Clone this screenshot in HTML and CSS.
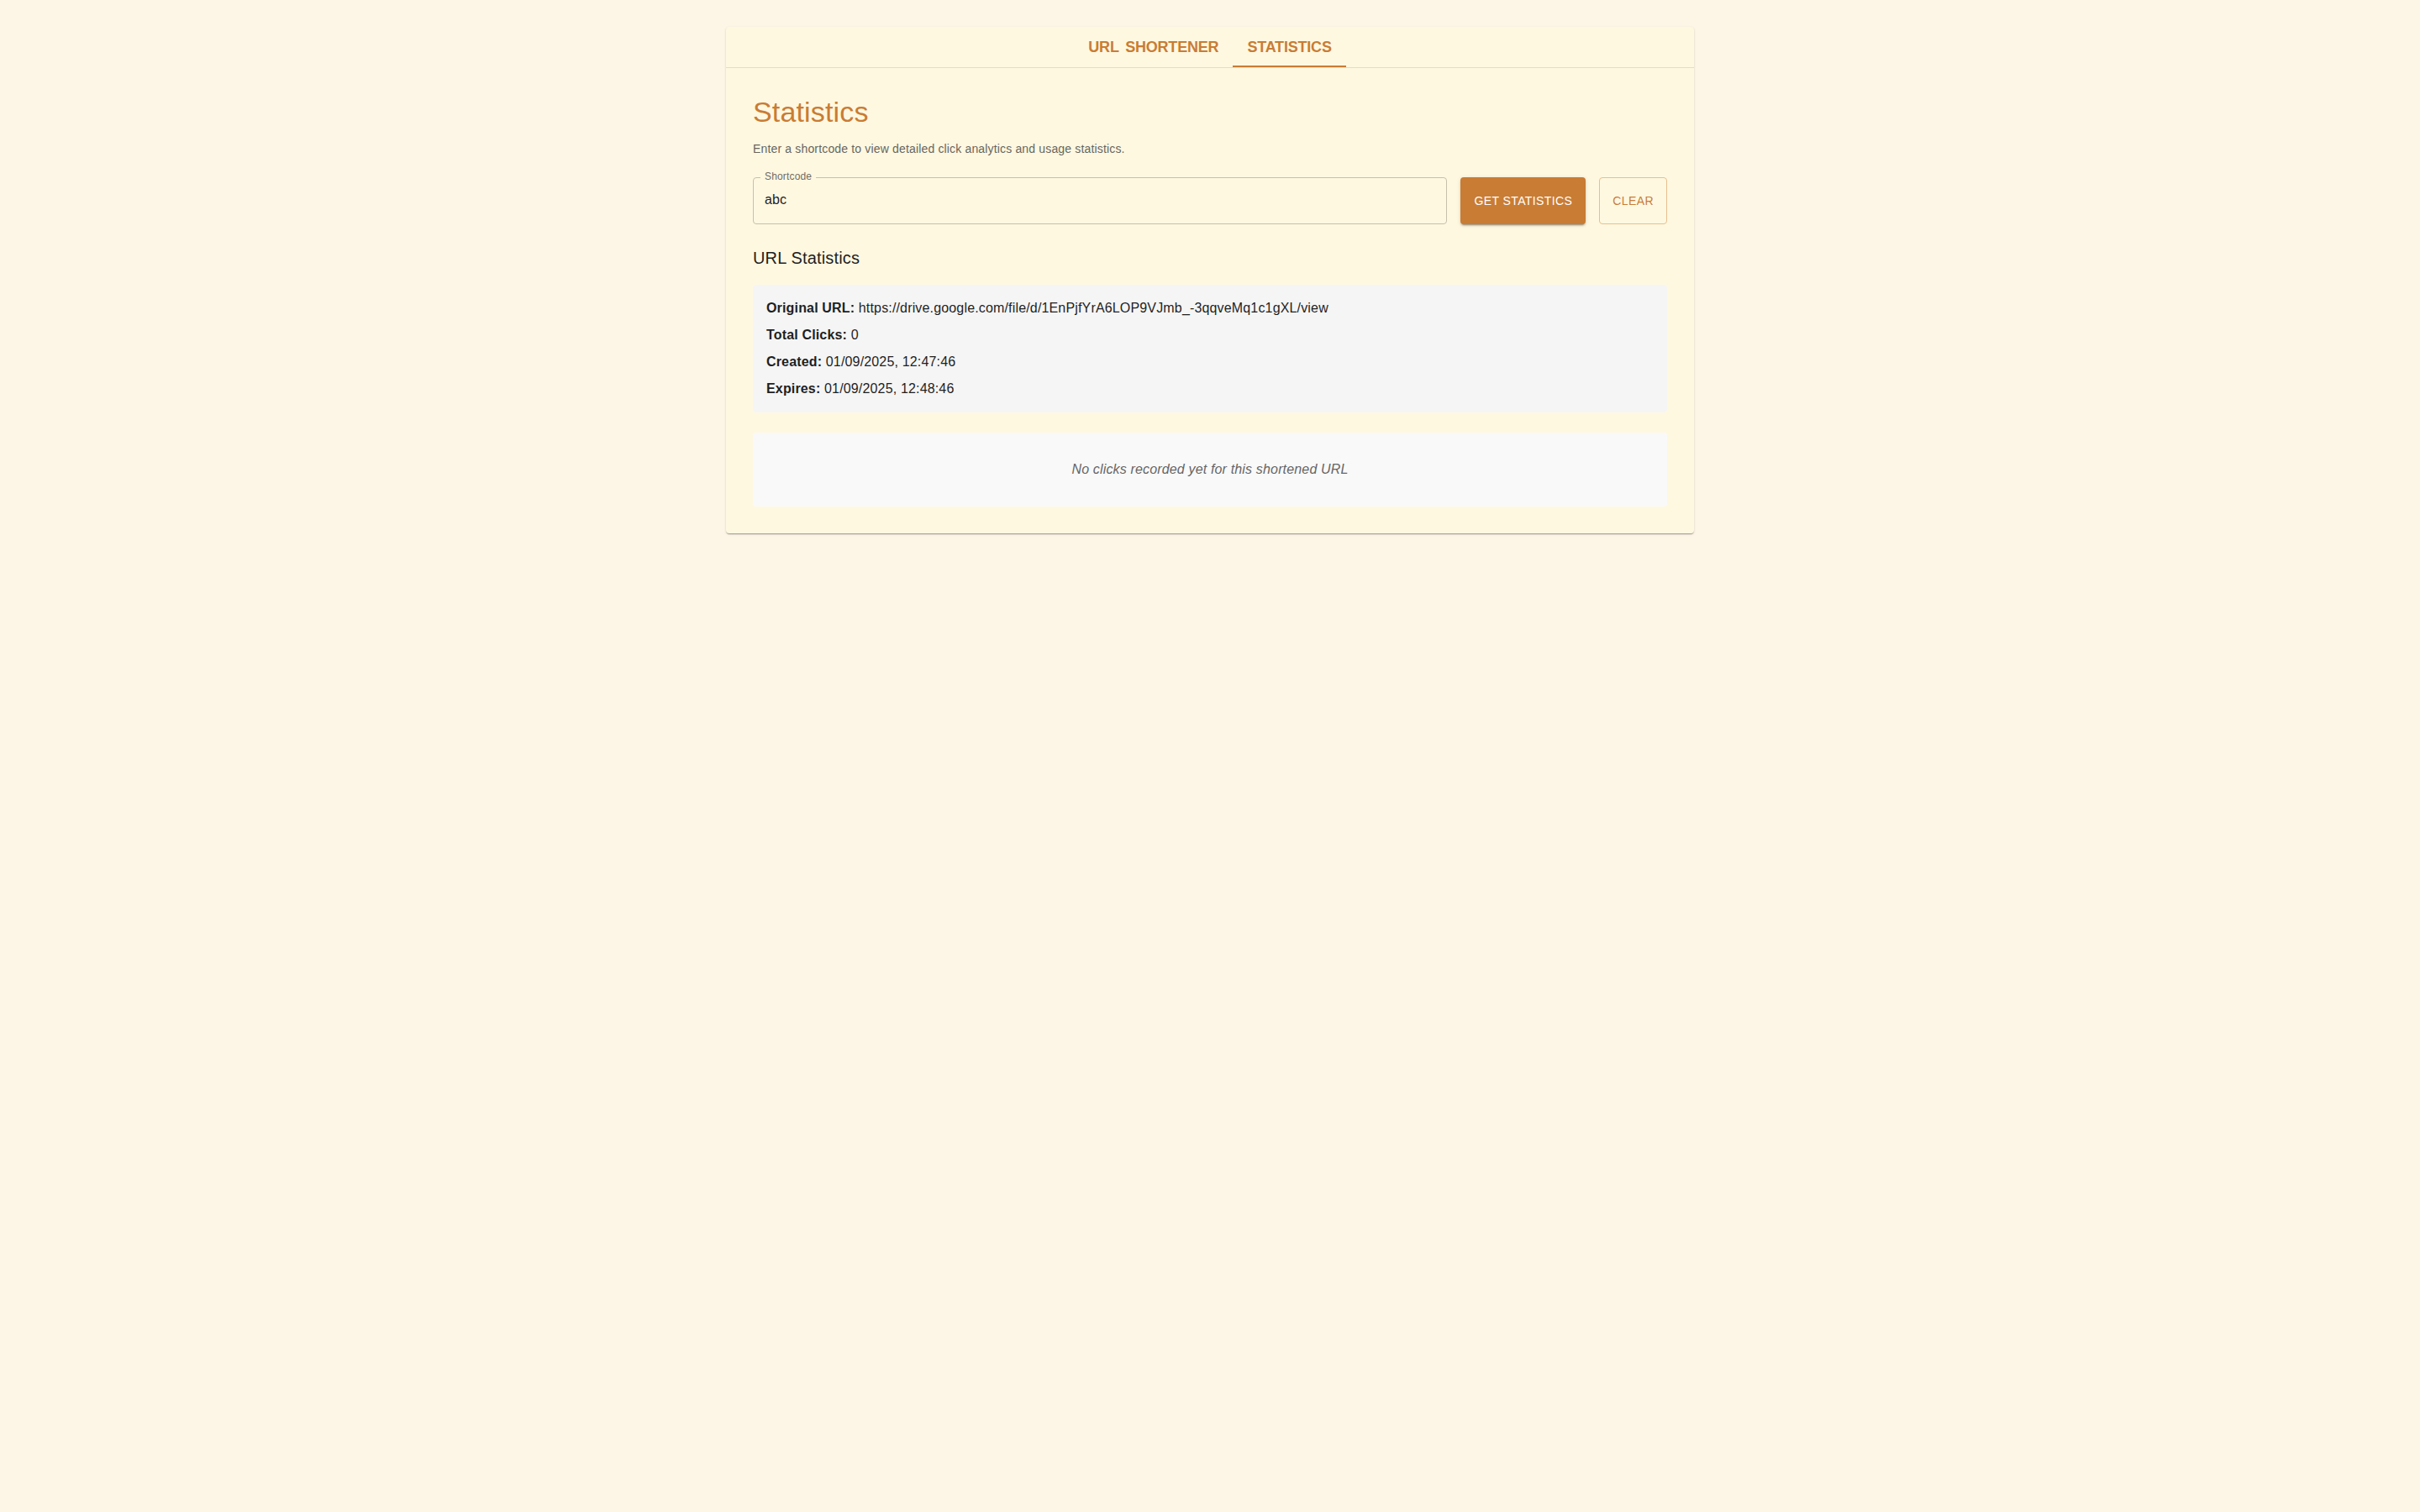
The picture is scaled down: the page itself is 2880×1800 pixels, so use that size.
FILE: index.html
```html
<!DOCTYPE html>
<html lang="en">
<head>
<meta charset="utf-8">
<title>URL Shortener - Statistics</title>
<link rel="stylesheet" href="styles.css">
</head>
<body>
<div class="container">
  <div class="card">
    <div class="tabs">
      <div class="tab">URL SHORTENER</div>
      <div class="tab tab-active">STATISTICS</div>
    </div>
    <div class="content">
      <h1 class="title">Statistics</h1>
      <p class="subtitle">Enter a shortcode to view detailed click analytics and usage statistics.</p>
      <div class="form-row">
        <div class="field">
          <span class="field-label">Shortcode</span>
          <input class="field-input" type="text" value="abc">
        </div>
        <button class="btn btn-primary">GET STATISTICS</button>
        <button class="btn btn-outline">CLEAR</button>
      </div>
      <h2 class="section-title">URL Statistics</h2>
      <div class="info-box">
        <div class="info-row"><strong>Original URL:</strong> https://drive.google.com/file/d/1EnPjfYrA6LOP9VJmb_-3qqveMq1c1gXL/view</div>
        <div class="info-row"><strong>Total Clicks:</strong> 0</div>
        <div class="info-row"><strong>Created:</strong> 01/09/2025, 12:47:46</div>
        <div class="info-row"><strong>Expires:</strong> 01/09/2025, 12:48:46</div>
      </div>
      <div class="empty-box">No clicks recorded yet for this shortened URL</div>
    </div>
  </div>
</div>
</body>
</html>
```

FILE: styles.css
```css
* {
  box-sizing: border-box;
}

html, body {
  margin: 0;
  padding: 0;
}

body {
  background: #fdf5e6;
  font-family: "Liberation Sans", Arial, sans-serif;
  letter-spacing: 0.01em;
  color: #1f1f1f;
  min-height: 1800px;
}

.container {
  width: 1152px;
  margin: 0 auto;
  padding-top: 32px;
}

.card {
  background: #fff8e1;
  border-radius: 4px;
  box-shadow: 0 2px 1px -1px rgba(0,0,0,0.2), 0 1px 1px 0 rgba(0,0,0,0.14), 0 1px 3px 0 rgba(0,0,0,0.12);
}

.tabs {
  display: flex;
  justify-content: center;
  border-bottom: 1px solid #e2dcc8;
}

.tab {
  height: 48px;
  padding: 2px 17px 0;
  display: flex;
  align-items: center;
  font-size: 18px;
  font-weight: 700;
  letter-spacing: -0.2px;
  word-spacing: 3px;
  color: #c97c34;
  border-bottom: 2px solid transparent;
}

.tab-active {
  border-bottom-color: #c97c34;
}

.content {
  padding: 32px 32px 32px;
}

.title {
  margin: 0 0 14px;
  font-size: 34px;
  line-height: 40px;
  font-weight: 400;
  color: #c97c34;
}

.subtitle {
  margin: 0 0 24px;
  font-size: 14px;
  line-height: 20px;
  color: #666660;
}

.form-row {
  display: flex;
  gap: 16px;
  height: 56px;
  margin-bottom: 24px;
}

.field {
  position: relative;
  flex: 1;
  border: 1px solid #c6c0ab;
  border-radius: 4px;
  display: flex;
  align-items: center;
}

.field-label {
  position: absolute;
  top: -10px;
  left: 8px;
  padding: 0 5px;
  font-size: 12px;
  line-height: 16px;
  color: #6f6c64;
  background: #fff8e1;
}

.field-input {
  width: 100%;
  border: none;
  background: transparent;
  outline: none;
  font-family: "Liberation Sans", Arial, sans-serif;
  letter-spacing: 0.01em;
  font-size: 16px;
  color: #1f1f1f;
  padding: 0 13px;
  margin-top: -2px;
}

.btn {
  font-family: "Liberation Sans", Arial, sans-serif;
  font-size: 14px;
  letter-spacing: 0.4px;
  border-radius: 4px;
  padding: 0 16px;
  cursor: pointer;
}

.btn-primary {
  background: #c97c34;
  color: #fff;
  border: none;
  box-shadow: 0 3px 1px -2px rgba(0,0,0,0.2), 0 2px 2px 0 rgba(0,0,0,0.14), 0 1px 5px 0 rgba(0,0,0,0.12);
}

.btn-outline {
  background: transparent;
  color: #c97c34;
  border: 1px solid #e7bf8d;
  padding: 0 15px;
}

.section-title {
  margin: 0 0 16px;
  font-size: 20px;
  line-height: 32px;
  font-weight: 400;
  color: #1f1f1f;
}

.info-box {
  background: #f5f5f5;
  border-radius: 4px;
  padding: 16px;
  display: flex;
  flex-direction: column;
  gap: 8px;
  margin-bottom: 24px;
}

.info-row {
  font-size: 16px;
  line-height: 24px;
  color: #1f1f1f;
}

.info-row strong {
  font-weight: 700;
}

.empty-box {
  background: #f9f9f9;
  border-radius: 4px;
  padding: 32px;
  text-align: center;
  font-size: 16px;
  line-height: 24px;
  font-style: italic;
  color: #666666;
}
```
